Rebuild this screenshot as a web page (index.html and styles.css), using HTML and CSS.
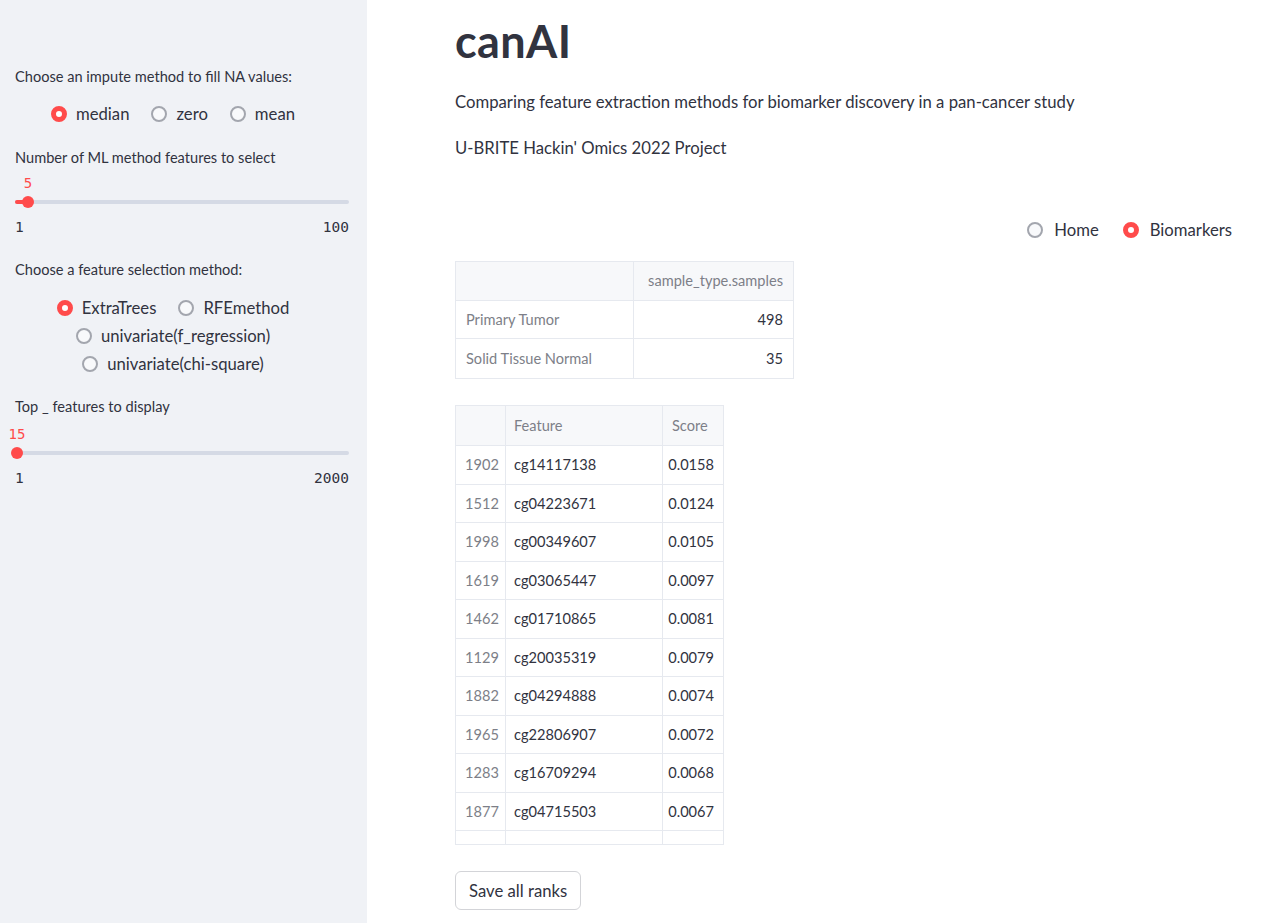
FILE: index.html
```html
<!DOCTYPE html>
<html>
<head>
<meta charset="utf-8">
<link rel="stylesheet" href="styles.css">
</head>
<body>
<div class="app">
  <aside class="sidebar">
    <div class="label l1">Choose an impute method to fill NA values:</div>
    <div class="radios r1">
      <label class="radio"><span class="dot on"></span>median</label>
      <label class="radio"><span class="dot"></span>zero</label>
      <label class="radio"><span class="dot"></span>mean</label>
    </div>
    <div class="label l2">Number of ML method features to select</div>
    <div class="slider">
      <div class="val-row"><span class="val" style="left:13px">5</span></div>
      <div class="track-area"><div class="track"><div class="fill" style="width:13px"></div><span class="thumb" style="left:13px"></span></div></div>
      <div class="ticks"><span>1</span><span>100</span></div>
    </div>
    <div class="label l3">Choose a feature selection method:</div>
    <div class="radios r2">
      <label class="radio"><span class="dot on"></span>ExtraTrees</label>
      <label class="radio"><span class="dot"></span>RFEmethod</label>
      <label class="radio"><span class="dot"></span>univariate(f_regression)</label>
      <label class="radio"><span class="dot"></span>univariate(chi-square)</label>
    </div>
    <div class="label l4">Top _ features to display</div>
    <div class="slider s2">
      <div class="val-row"><span class="val" style="left:2px">15</span></div>
      <div class="track-area"><div class="track"><div class="fill" style="width:2px"></div><span class="thumb" style="left:2px"></span></div></div>
      <div class="ticks"><span>1</span><span>2000</span></div>
    </div>
  </aside>
  <main class="main">
    <h1 class="title">canAI</h1>
    <p class="para p1">Comparing feature extraction methods for biomarker discovery in a pan-cancer study</p>
    <p class="para p2">U-BRITE Hackin' Omics 2022 Project</p>
    <div class="nav">
      <label class="radio"><span class="dot"></span>Home</label>
      <label class="radio"><span class="dot on"></span>Biomarkers</label>
    </div>
    <div class="df df1">
      <div class="row head"><div class="c c1"></div><div class="c c2 num">sample_type.samples</div></div>
      <div class="row"><div class="c c1 idx">Primary Tumor</div><div class="c c2 num">498</div></div>
      <div class="row"><div class="c c1 idx">Solid Tissue Normal</div><div class="c c2 num">35</div></div>
    </div>
    <div class="df df2">
      <div class="row head"><div class="c k1"></div><div class="c k2">Feature</div><div class="c k3">Score</div></div>
      <div class="row"><div class="c k1 idx">1902</div><div class="c k2">cg14117138</div><div class="c k3 num">0.0158</div></div>
      <div class="row"><div class="c k1 idx">1512</div><div class="c k2">cg04223671</div><div class="c k3 num">0.0124</div></div>
      <div class="row"><div class="c k1 idx">1998</div><div class="c k2">cg00349607</div><div class="c k3 num">0.0105</div></div>
      <div class="row"><div class="c k1 idx">1619</div><div class="c k2">cg03065447</div><div class="c k3 num">0.0097</div></div>
      <div class="row"><div class="c k1 idx">1462</div><div class="c k2">cg01710865</div><div class="c k3 num">0.0081</div></div>
      <div class="row"><div class="c k1 idx">1129</div><div class="c k2">cg20035319</div><div class="c k3 num">0.0079</div></div>
      <div class="row"><div class="c k1 idx">1882</div><div class="c k2">cg04294888</div><div class="c k3 num">0.0074</div></div>
      <div class="row"><div class="c k1 idx">1965</div><div class="c k2">cg22806907</div><div class="c k3 num">0.0072</div></div>
      <div class="row"><div class="c k1 idx">1283</div><div class="c k2">cg16709294</div><div class="c k3 num">0.0068</div></div>
      <div class="row"><div class="c k1 idx">1877</div><div class="c k2">cg04715503</div><div class="c k3 num">0.0067</div></div>
      <div class="row"><div class="c k1 idx">1044</div><div class="c k2">cg14457071</div><div class="c k3 num">0.0066</div></div>
    </div>
    <button class="btn">Save all ranks</button>
  </main>
</div>
</body>
</html>
```

FILE: styles.css
```css
* { box-sizing: border-box; }
html, body { margin: 0; padding: 0; }
body {
  font-family: Lato, "Noto Sans", sans-serif;
  color: #31333f;
  background: #ffffff;
  width: 1280px;
  height: 923px;
  overflow: hidden;
}
.app { display: flex; height: 923px; }
.sidebar {
  width: 367px;
  flex: none;
  background: #f0f2f6;
  padding: 67px 18px 0 15px;
  display: flex;
  flex-direction: column;
}
.label { font-size: 14.6px; line-height: 20px; }
.l2 { margin-top: 22px; }
.l3 { margin-top: 23px; }
.l4 { margin-top: 21px; }

.radios {
  display: flex;
  flex-wrap: wrap;
  justify-content: center;
  width: 316px;
  column-gap: 22px;
  row-gap: 4px;
}
.r1 { margin-top: 15px; }
.r2 { margin-top: 16px; }
.radio {
  display: flex;
  align-items: center;
  font-size: 16.7px;
  line-height: 24px;
  height: 24px;
  gap: 9px;
}
.dot {
  width: 16px;
  height: 16px;
  border-radius: 50%;
  border: 2px solid #a3a6ae;
  background: #f8f9fb;
  flex: none;
}
.dot.on {
  border: 5px solid #ff4b4b;
  background: #ffffff;
}

.slider { margin-top: 5px; }
.s2 { margin-top: 7px; }
.val-row { position: relative; height: 20px; }
.val {
  position: absolute;
  top: 0;
  transform: translateX(-50%);
  font-family: "DejaVu Sans Mono", "Liberation Mono", monospace;
  font-size: 14px;
  line-height: 20px;
  color: #ff4b4b;
}
.track-area {
  margin-top: 3px;
  height: 12px;
  display: flex;
  align-items: center;
}
.track {
  position: relative;
  flex: 1;
  height: 4px;
  border-radius: 2px;
  background: #d5dae5;
}
.fill { height: 4px; background: #ff4b4b; border-radius: 2px; }
.thumb {
  position: absolute;
  top: -4px;
  width: 12px;
  height: 12px;
  margin-left: -6px;
  border-radius: 50%;
  background: #ff4b4b;
}
.ticks {
  display: flex;
  justify-content: space-between;
  margin-top: 9px;
  font-family: "DejaVu Sans Mono", "Liberation Mono", monospace;
  font-size: 14.5px;
  line-height: 20px;
  color: #31333f;
}

.main {
  flex: 1;
  padding: 15px 48px 0 88px;
  display: flex;
  flex-direction: column;
  align-items: flex-start;
}
.title {
  margin: 0;
  font-size: 45px;
  line-height: 53px;
  font-weight: 700;
  letter-spacing: 0.4px;
}
.para { margin: 0; font-size: 16.7px; line-height: 24px; }
.p1 { margin-top: 22px; }
.p2 { margin-top: 22px; }
.nav {
  align-self: flex-end;
  display: flex;
  gap: 24px;
  margin-top: 58px;
}
.nav .radio { gap: 11px; }

.df {
  margin-top: 19px;
  border: 1px solid #e6e9ef;
  font-size: 14.6px;
  overflow: hidden;
}
.df .row { display: flex; border-bottom: 1px solid #e6e9ef; }
.df .row:last-child { border-bottom: none; }
.df .c {
  display: flex;
  align-items: center;
  padding: 0 10px;
  border-right: 1px solid #e6e9ef;
  white-space: nowrap;
}
.df .c:last-child { border-right: none; }
.df .head { background: #f7f8fa; }
.df .head .c { color: #7d7f88; }
.idx { color: #7d7f88; }
.num { justify-content: flex-end; }

.df1 { height: 118px; }
.df1 .row { height: 38.67px; }
.df1 .c1 { width: 178px; }
.df1 .c2 { width: 159px; }

.df2 { margin-top: 26px; height: 440px; }
.df2 .row { height: 38.5px; }
.df2 .row.head { height: 40px; }
.df2 .k1 { width: 50px; padding: 0 9px; }
.df2 .k2 { width: 157px; padding: 0 8px; }
.df2 .k3 { width: 60px; padding: 0 9px; }

.btn {
  margin-top: 26px;
  height: 39px;
  padding: 0 13px;
  border: 1px solid #d3d4d8;
  border-radius: 6px;
  background: #ffffff;
  font-family: Lato, "Noto Sans", sans-serif;
  font-size: 16.7px;
  color: #31333f;
}
```
